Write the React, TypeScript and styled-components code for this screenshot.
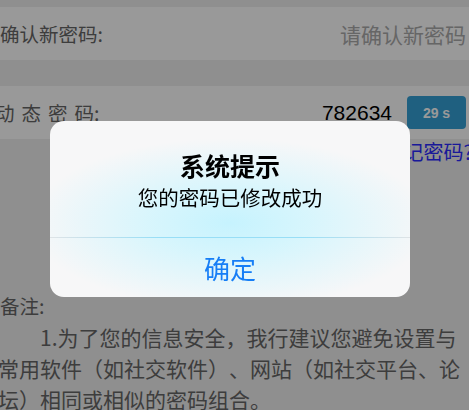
import React from "react";
import styled, { createGlobalStyle } from "styled-components";

const GlobalStyle = createGlobalStyle`
  html, body {
    margin: 0;
    padding: 0;
    background: #eeeeee;
    font-family: "Noto Sans CJK SC", "Noto Sans", sans-serif;
    overflow: hidden;
    text-spacing-trim: space-all;
  }
`;

function App() {
  return (
    <>
      <GlobalStyle />
      <Page>
        <FormRow>
          <Label>确认新密码:</Label>
          <Placeholder>请确认新密码</Placeholder>
        </FormRow>
        <FormRow $gap>
          <Label $spaced>
            动态密<Tight>码:</Tight>
          </Label>
          <CodeGroup>
            <Code>782634</Code>
            <TimerButton>29 s</TimerButton>
          </CodeGroup>
        </FormRow>
        <LinkRow>
          <ForgotLink href="#">忘记密码?</ForgotLink>
        </LinkRow>
        <Notes>
          <NoteTitle>备注:</NoteTitle>
          <NoteText>
            1.为了您的信息安全，我行建议您避免设置与常用软件（如社交软件）、网站（如社交平台、论坛）相同或相似的密码组合。
          </NoteText>
        </Notes>
      </Page>
      <Overlay>
        <Alert>
          <AlertBody>
            <AlertTitle>系统提示</AlertTitle>
            <AlertMessage>您的密码已修改成功</AlertMessage>
          </AlertBody>
          <AlertButton>确定</AlertButton>
        </Alert>
      </Overlay>
    </>
  );
}

const Page = styled.div`
  padding-top: 7px;
  height: 410px;
  box-sizing: border-box;
`;

const FormRow = styled.div<{ $gap?: boolean }>`
  display: flex;
  align-items: center;
  justify-content: space-between;
  height: 53px;
  margin-top: ${(p) => (p.$gap ? "26px" : "0")};
  padding: 0 3px 0 0;
  background: #ffffff;
`;

const Label = styled.span<{ $spaced?: boolean }>`
  font-size: 19.5px;
  color: #666666;
  letter-spacing: ${(p) => (p.$spaced ? "7px" : "0")};
  margin-left: ${(p) => (p.$spaced ? "-5px" : "0")};
`;

const Tight = styled.span`
  letter-spacing: 0;
`;

const Placeholder = styled.span`
  font-size: 21px;
  color: #aaaaaa;
`;

const CodeGroup = styled.div`
  display: flex;
  align-items: center;
  gap: 15px;
`;

const Code = styled.span`
  font-family: "Liberation Sans", Arial, sans-serif;
  font-size: 21px;
  color: #000000;
`;

const TimerButton = styled.button`
  width: 59px;
  height: 33px;
  border: none;
  border-radius: 4px;
  background: #34a0d6;
  color: #ffffff;
  font-family: "Liberation Sans", Arial, sans-serif;
  font-weight: bold;
  font-size: 14px;
  padding: 0;
`;

const LinkRow = styled.div`
  display: flex;
  justify-content: flex-end;
  margin-right: -4px;
  height: 24px;
  align-items: center;
`;

const ForgotLink = styled.a`
  font-size: 20px;
  color: #2b2bff;
  text-decoration: none;
`;

const Notes = styled.div`
  margin-top: 131px;
  width: 466px;
  color: #666666;
`;

const NoteTitle = styled.div`
  font-size: 19.5px;
  line-height: 24px;
`;

const NoteText = styled.p`
  margin: 4px 0 0 -2px;
  font-size: 21px;
  line-height: 31px;
  text-indent: 2em;
`;

const Overlay = styled.div`
  position: fixed;
  inset: 0;
  background: rgba(0, 0, 0, 0.4);
  display: flex;
  align-items: flex-start;
  padding: 121px 0 0 50px;
`;

const Alert = styled.div`
  width: 360px;
  height: 176px;
  border-radius: 14px;
  overflow: hidden;
  display: flex;
  flex-direction: column;
  background:
    radial-gradient(ellipse 200px 85px at 50% 58%, #c6f3fe 0%, rgba(205, 245, 254, 0.75) 40%, rgba(247, 247, 248, 0) 100%),
    #f7f7f8;
`;

const AlertBody = styled.div`
  height: 117px;
  box-sizing: border-box;
  padding-top: 27px;
  display: flex;
  flex-direction: column;
  align-items: center;
  border-bottom: 1px solid;
  border-image: linear-gradient(90deg, #dfe3e6, #98def6 30%, #98def6 70%, #dfe3e6) 1;
`;

const AlertTitle = styled.div`
  font-size: 25px;
  font-weight: bold;
  line-height: 34px;
  color: #000000;
`;

const AlertMessage = styled.div`
  font-size: 20.5px;
  line-height: 30px;
  color: #000000;
`;

const AlertButton = styled.div`
  flex: 1;
  display: flex;
  align-items: center;
  justify-content: center;
  font-size: 26px;
  color: #167ef6;
`;

export default App;
